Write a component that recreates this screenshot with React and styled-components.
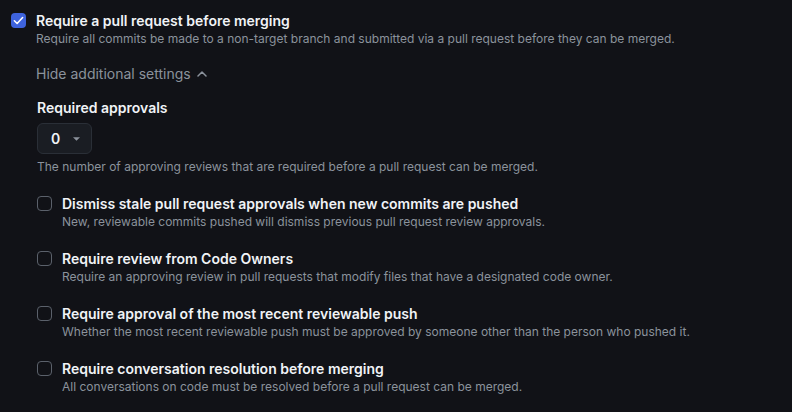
import React from "react";
import styled, { createGlobalStyle } from "styled-components";

const Global = createGlobalStyle`
  html, body { margin: 0; padding: 0; background: #111217; }
  body { font-family: Inter, "Noto Sans", sans-serif; -webkit-font-smoothing: antialiased; }
`;

const Page = styled.div`
  width: 792px;
  height: 412px;
  box-sizing: border-box;
  padding: 12px 0 0 11px;
  background: #111217;
  color: #f0f3f6;
  overflow: hidden;
`;

const Row = styled.div`
  display: flex;
  align-items: flex-start;
  gap: 10px;
`;

const Box = styled.span`
  flex: none;
  width: 15px;
  height: 15px;
  box-sizing: border-box;
  border-radius: 4px;
  margin-top: ${(p) => p.$top || 0}px;
  display: flex;
  align-items: center;
  justify-content: center;
  background: ${(p) => (p.$checked ? "#3e63dd" : "transparent")};
  border: ${(p) => (p.$checked ? "none" : "1px solid #5b616b")};
`;

const Texts = styled.div`
  display: flex;
  flex-direction: column;
`;

const Title = styled.div`
  font-size: 14px;
  font-weight: 600;
  line-height: 18px;
  color: #f0f3f6;
`;

const Desc = styled.div`
  font-size: 12px;
  line-height: 18px;
  color: #8b929c;
`;

const Settings = styled.div`
  padding-left: 25px;
  display: flex;
  flex-direction: column;
`;

const Toggle = styled.div`
  margin-top: 16px;
  display: flex;
  align-items: center;
  gap: 6px;
  font-size: 14px;
  line-height: 20px;
  color: #8b929c;
`;

const Label = styled.div`
  margin-top: 14px;
  font-size: 14px;
  font-weight: 600;
  line-height: 20px;
  color: #f0f3f6;
  padding-left: 1px;
`;

const Select = styled.div`
  margin-top: 5px;
  margin-left: 1px;
  width: 55px;
  height: 31px;
  box-sizing: border-box;
  border: 1px solid #2a2f37;
  border-radius: 6px;
  background: #1a1d23;
  display: flex;
  align-items: center;
  padding-left: 13px;
  gap: 13px;
  font-size: 14px;
  font-weight: 600;
  color: #f0f3f6;
`;

const Help = styled.div`
  margin-top: 4px;
  padding-left: 1px;
  font-size: 12px;
  line-height: 18px;
  color: #8b929c;
`;

const Options = styled.div`
  margin-top: 19px;
  display: flex;
  flex-direction: column;
  gap: 19px;
  padding-left: 1px;
`;

const Check = () => (
  <svg width="11" height="11" viewBox="0 0 12 12">
    <path d="M1.5 6.3l3 3 6-6.6" fill="none" stroke="#fff" strokeWidth="1.7" strokeLinecap="round" strokeLinejoin="round" />
  </svg>
);

const ChevronUp = () => (
  <svg width="10" height="6" viewBox="0 0 10 6">
    <path d="M1 5l4-4 4 4" fill="none" stroke="#8b929c" strokeWidth="1.5" strokeLinecap="round" strokeLinejoin="round" />
  </svg>
);

const Caret = () => (
  <svg width="7" height="4" viewBox="0 0 8 4">
    <path d="M0 0h8L4 4z" fill="#8b929c" />
  </svg>
);

const options = [
  ["Dismiss stale pull request approvals when new commits are pushed", "New, reviewable commits pushed will dismiss previous pull request review approvals."],
  ["Require review from Code Owners", "Require an approving review in pull requests that modify files that have a designated code owner."],
  ["Require approval of the most recent reviewable push", "Whether the most recent reviewable push must be approved by someone other than the person who pushed it."],
  ["Require conversation resolution before merging", "All conversations on code must be resolved before a pull request can be merged."],
];

export default function App() {
  return (
    <>
      <Global />
      <Page>
        <Row>
          <Box $checked $top={1}><Check /></Box>
          <Texts>
            <Title>Require a pull request before merging</Title>
            <Desc>Require all commits be made to a non-target branch and submitted via a pull request before they can be merged.</Desc>
          </Texts>
        </Row>
        <Settings>
          <Toggle>Hide additional settings <ChevronUp /></Toggle>
          <Label>Required approvals</Label>
          <Select>0 <Caret /></Select>
          <Help>The number of approving reviews that are required before a pull request can be merged.</Help>
          <Options>
            {options.map(([t, d]) => (
              <Row key={t}>
                <Box $top={1} />
                <Texts>
                  <Title>{t}</Title>
                  <Desc>{d}</Desc>
                </Texts>
              </Row>
            ))}
          </Options>
        </Settings>
      </Page>
    </>
  );
}
